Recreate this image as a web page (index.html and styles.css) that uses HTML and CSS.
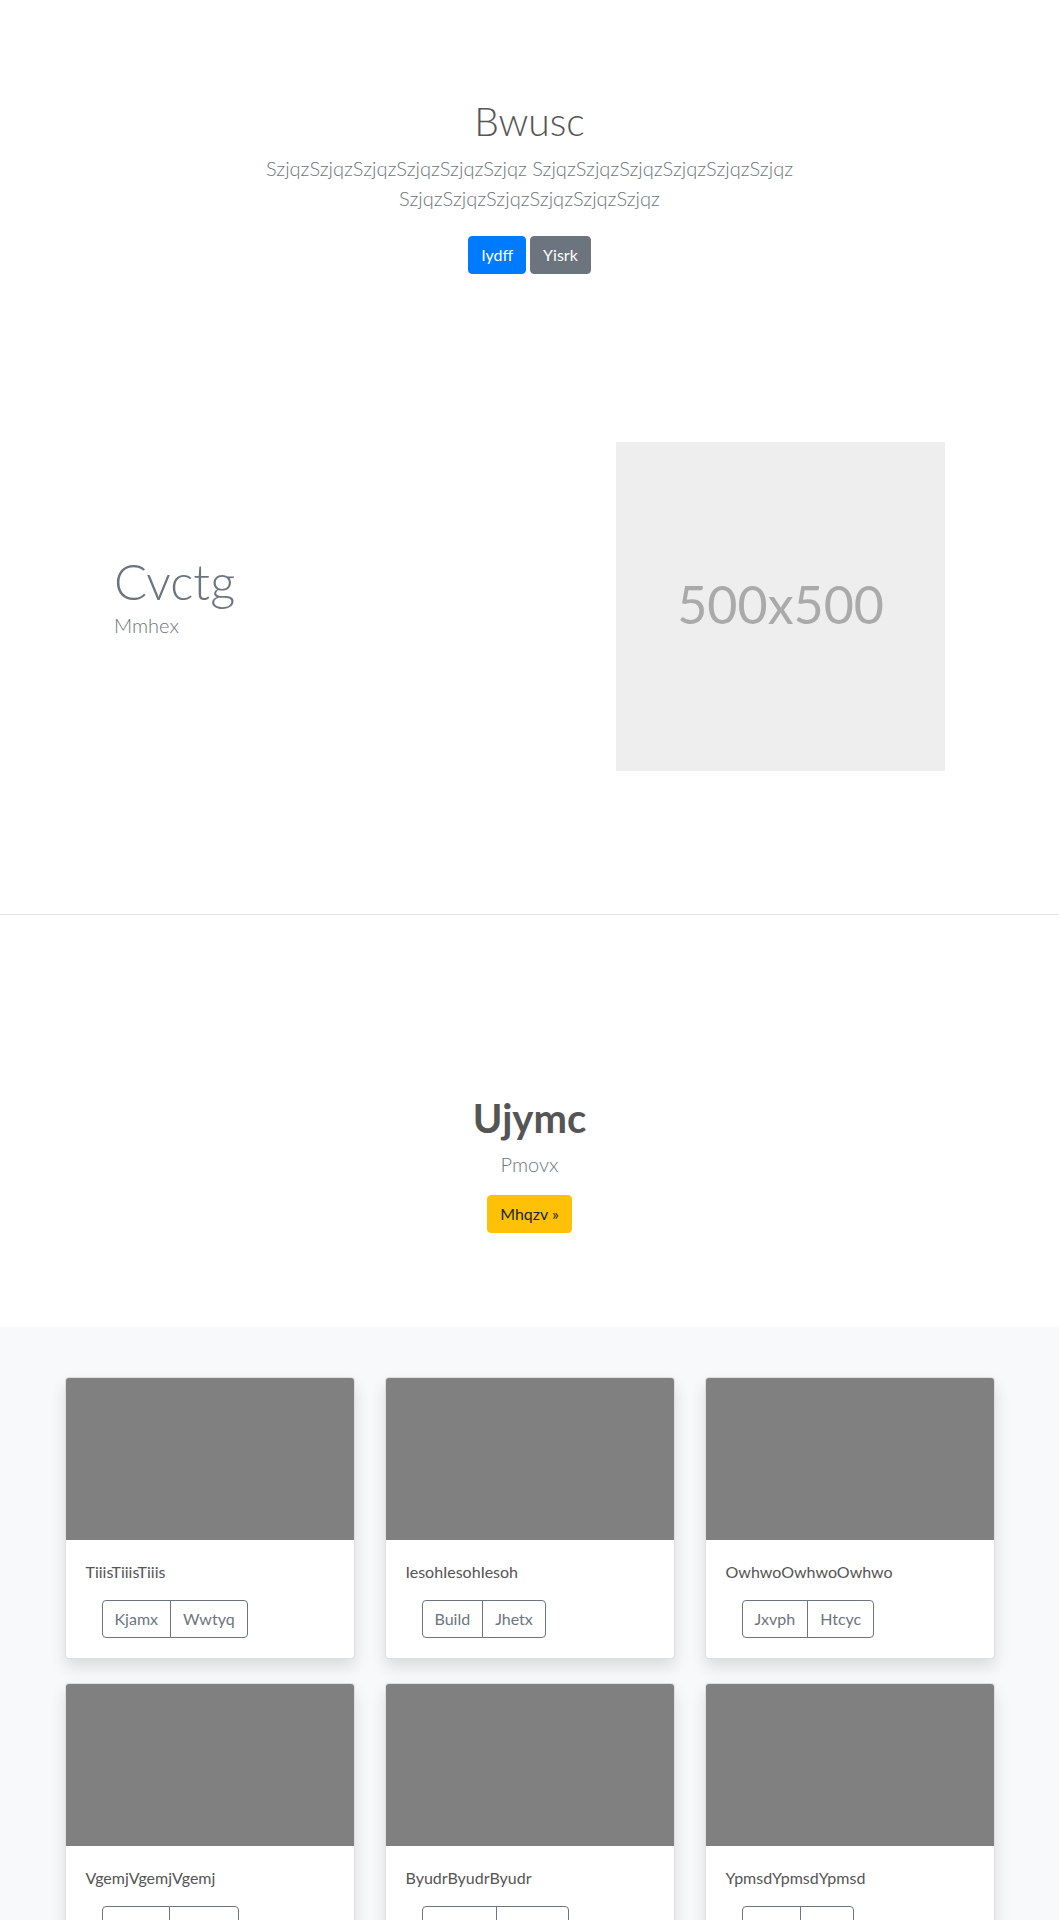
FILE: index.html
```html
<!DOCTYPE html>
<html lang="en">
<head>
<meta charset="utf-8">
<title>Bwusc</title>
<link rel="stylesheet" href="styles.css">
</head>
<body>
<main>
  <section class="hero">
    <h1 class="hero-title">Bwusc</h1>
    <p class="lead hero-lead">SzjqzSzjqzSzjqzSzjqzSzjqzSzjqz SzjqzSzjqzSzjqzSzjqzSzjqzSzjqz SzjqzSzjqzSzjqzSzjqzSzjqzSzjqz</p>
    <div class="hero-actions">
      <a class="btn btn-primary" href="#">Iydff</a>
      <a class="btn btn-secondary" href="#">Yisrk</a>
    </div>
  </section>

  <section class="feature">
    <div class="feature-row">
      <div class="feature-text">
        <h2 class="feature-title">Cvctg</h2>
        <p class="lead feature-lead">Mmhex</p>
      </div>
      <div class="feature-media">
        <div class="placeholder"><span>500x500</span></div>
      </div>
    </div>
  </section>

  <hr class="divider">

  <section class="cta">
    <h2 class="cta-title">Ujymc</h2>
    <p class="lead cta-lead">Pmovx</p>
    <a class="btn btn-warning" href="#">Mhqzv &raquo;</a>
  </section>

  <section class="album">
    <div class="album-grid">
      <div class="card">
        <div class="card-img"></div>
        <div class="card-body">
          <p class="card-text">TiiisTiiisTiiis</p>
          <div class="btn-group"><button class="btn btn-outline">Kjamx</button><button class="btn btn-outline">Wwtyq</button></div>
        </div>
      </div>
      <div class="card">
        <div class="card-img"></div>
        <div class="card-body">
          <p class="card-text">IesohIesohIesoh</p>
          <div class="btn-group"><button class="btn btn-outline">Build</button><button class="btn btn-outline">Jhetx</button></div>
        </div>
      </div>
      <div class="card">
        <div class="card-img"></div>
        <div class="card-body">
          <p class="card-text">OwhwoOwhwoOwhwo</p>
          <div class="btn-group"><button class="btn btn-outline">Jxvph</button><button class="btn btn-outline">Htcyc</button></div>
        </div>
      </div>
      <div class="card">
        <div class="card-img"></div>
        <div class="card-body">
          <p class="card-text">VgemjVgemjVgemj</p>
          <div class="btn-group"><button class="btn btn-outline">Wfldx</button><button class="btn btn-outline">Cxbcb</button></div>
        </div>
      </div>
      <div class="card">
        <div class="card-img"></div>
        <div class="card-body">
          <p class="card-text">ByudrByudrByudr</p>
          <div class="btn-group"><button class="btn btn-outline">Vmqdk</button><button class="btn btn-outline">Hdkfw</button></div>
        </div>
      </div>
      <div class="card">
        <div class="card-img"></div>
        <div class="card-body">
          <p class="card-text">YpmsdYpmsdYpmsd</p>
          <div class="btn-group"><button class="btn btn-outline">Pkllx</button><button class="btn btn-outline">Lxjv</button></div>
        </div>
      </div>
    </div>
  </section>
</main>
</body>
</html>
```

FILE: styles.css
```css
* { box-sizing: border-box; }

html, body {
  margin: 0;
  padding: 0;
}

body {
  font-family: "Lato", "Open Sans", "Liberation Sans", sans-serif;
  font-size: 16px;
  line-height: 1.5;
  color: #555;
  background: #fff;
}

.lead {
  font-size: 20px;
  font-weight: 300;
  line-height: 1.5;
  color: #6c757d;
}

.btn {
  display: inline-block;
  font-family: inherit;
  font-size: 16px;
  font-weight: 400;
  line-height: 1.5;
  padding: 6px 12px;
  border: 1px solid transparent;
  border-radius: 4px;
  text-decoration: none;
  text-align: center;
  vertical-align: middle;
  cursor: pointer;
  background: transparent;
}

.btn-primary { background: #007bff; border-color: #007bff; color: #fff; }
.btn-secondary { background: #6c757d; border-color: #6c757d; color: #fff; }
.btn-warning { background: #ffc107; border-color: #ffc107; color: #212529; }
.btn-outline { border-color: #6c757d; color: #6c757d; background: transparent; }

/* Hero */
.hero {
  text-align: center;
  padding: 98px 15px 0;
}

.hero-title {
  font-size: 39px;
  font-weight: 300;
  line-height: 1.2;
  margin: 0 0 8px;
  color: #555;
}

.hero-lead {
  max-width: 610px;
  margin: 0 auto;
}

.hero-actions {
  margin-top: 23px;
  display: flex;
  justify-content: center;
  gap: 4px;
}

/* Feature */
.feature {
  padding: 168px 0 143px;
}

.feature-row {
  max-width: 861px;
  margin: 0 auto;
  display: flex;
  align-items: center;
}

.feature-text {
  flex: 0 0 58.3333%;
  padding: 0 15px;
}

.feature-media {
  flex: 0 0 41.6667%;
  padding: 0 15px;
}

.feature-title {
  font-size: 49px;
  font-weight: 300;
  line-height: 1;
  color: #6c757d;
  margin: 0 0 4px;
}

.feature-lead {
  margin: 0 0 16px;
}

.placeholder {
  aspect-ratio: 1 / 1;
  background: #eee;
  display: flex;
  align-items: center;
  justify-content: center;
}

.placeholder span {
  font-size: 52px;
  color: #aaa;
  font-weight: 400;
  margin-top: -4px;
}

.divider {
  margin: 0;
  border: 0;
  border-top: 1px solid #e5e5e5;
}

/* CTA */
.cta {
  text-align: center;
  padding: 179px 15px 94px;
}

.cta-title {
  font-size: 40px;
  font-weight: 700;
  line-height: 1.2;
  color: #555;
  margin: 0 0 7px;
}

.cta-lead {
  margin: 0 0 16px;
}

/* Album */
.album {
  background: #f8f9fa;
  padding: 50px 0 48px;
}

.album-grid {
  max-width: 960px;
  margin: 0 auto;
  padding: 0 15px;
  display: grid;
  grid-template-columns: repeat(3, 1fr);
  column-gap: 30px;
  row-gap: 24px;
}

.card {
  background: #fff;
  border: 1px solid rgba(0, 0, 0, 0.125);
  border-radius: 4px;
  overflow: hidden;
  box-shadow: 0 8px 16px rgba(0, 0, 0, 0.12);
}

.card-img {
  height: 162px;
  background: #808080;
}

.card-body {
  padding: 20px;
}

.card-text {
  margin: 0 0 16px;
  color: #555;
}

.btn-group {
  display: inline-flex;
  margin-left: 16px;
}

.btn-group .btn + .btn {
  margin-left: -1px;
}

.btn-group .btn:first-child {
  border-top-right-radius: 0;
  border-bottom-right-radius: 0;
}

.btn-group .btn:last-child {
  border-top-left-radius: 0;
  border-bottom-left-radius: 0;
}
```
